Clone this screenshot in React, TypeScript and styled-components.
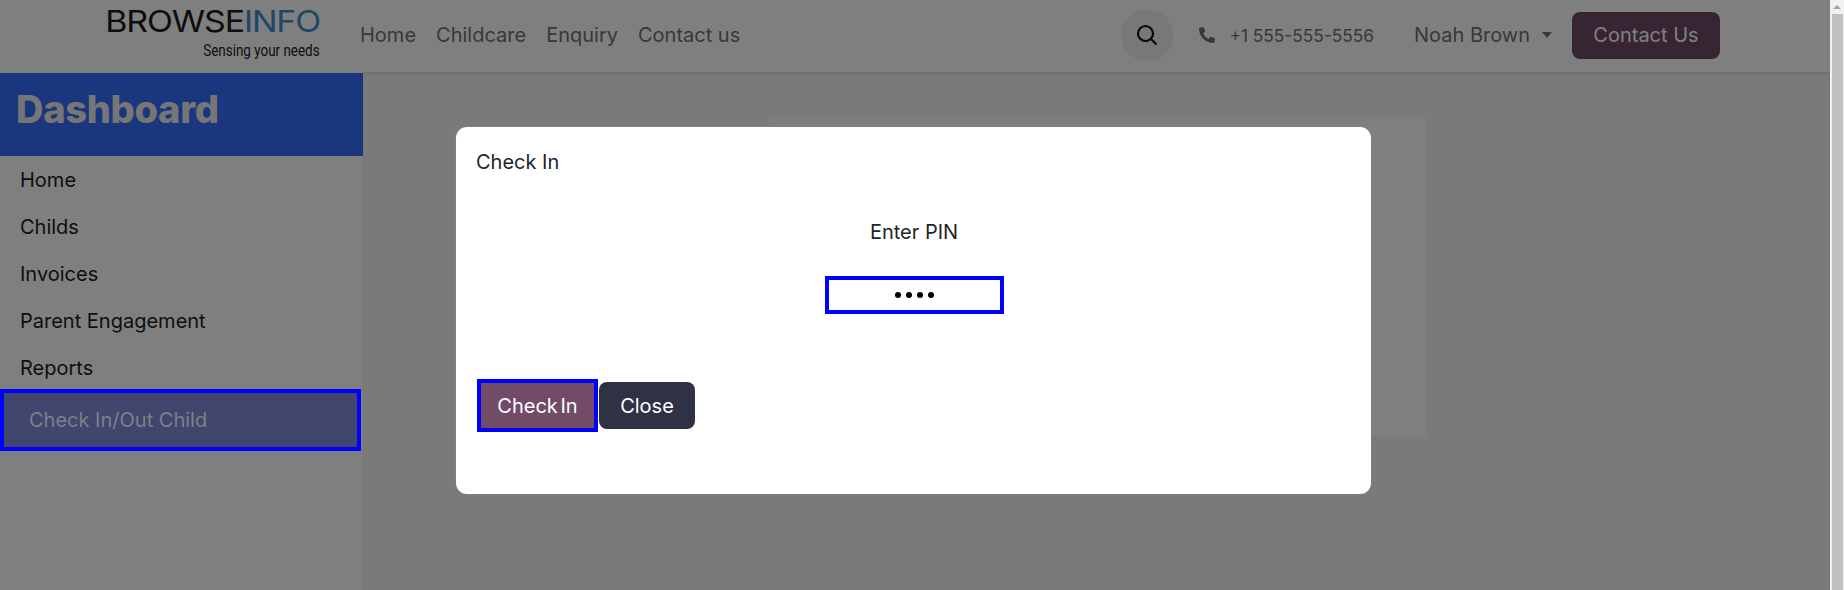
import React from 'react';
import styled, { createGlobalStyle } from 'styled-components';
import { FaPhoneAlt } from 'react-icons/fa';

const GlobalStyle = createGlobalStyle`
  html, body {
    margin: 0;
    padding: 0;
    height: 100%;
    overflow: hidden;
    background: #fff;
  }
  * {
    box-sizing: border-box;
    font-family: 'Inter', 'Liberation Sans', sans-serif;
  }
`;

const Root = styled.div`
  display: flex;
  width: 1844px;
  height: 590px;
`;

const Page = styled.div`
  position: relative;
  flex: 1;
  display: flex;
  flex-direction: column;
  background: #f4f4f4;
  overflow: hidden;
`;

const Header = styled.header`
  display: flex;
  align-items: center;
  height: 72px;
  flex-shrink: 0;
  padding: 0 0 2px 106px;
  background: #fff;
  box-shadow: 0 1px 3px rgba(0, 0, 0, 0.12);
`;

const Logo = styled.div`
  display: flex;
  flex-direction: column;
  align-items: flex-end;
  width: 214px;
  margin-right: 40px;
  color: #1a1a1a;
`;

const LogoWord = styled.div`
  font-size: 30px;
  line-height: 28px;
  font-weight: 400;
  letter-spacing: -1px;
  white-space: nowrap;
  transform: scaleX(1.13);
  transform-origin: right center;

  span {
    color: #3b8fd0;
  }
`;

const LogoTag = styled.div`
  font-family: 'Roboto', sans-serif;
  font-size: 16px;
  line-height: 18px;
  margin-top: 7px;
  margin-bottom: 3px;
  white-space: nowrap;
  transform: scaleX(0.84);
  transform-origin: right center;
`;

const Nav = styled.nav`
  display: flex;
  gap: 20px;
`;

const NavLink = styled.a`
  font-size: 20px;
  color: #75706f;
`;

const HeaderRight = styled.div`
  display: flex;
  align-items: center;
  margin-left: auto;
  padding-right: 110px;
`;

const SearchButton = styled.div`
  display: flex;
  align-items: center;
  justify-content: center;
  width: 52px;
  height: 52px;
  border-radius: 50%;
  background: #f0f0f0;
  color: #111;
`;

const Phone = styled.div`
  display: flex;
  align-items: center;
  gap: 14px;
  margin-left: 26px;
  font-size: 17.3px;
  color: #75706f;
`;

const UserMenu = styled.div`
  display: flex;
  align-items: center;
  gap: 12px;
  margin-left: 40px;
  font-size: 20px;
  color: #75706f;
`;

const Caret = styled.span`
  width: 0;
  height: 0;
  border-left: 5.5px solid transparent;
  border-right: 5.5px solid transparent;
  border-top: 6px solid #75706f;
`;

const ContactButton = styled.div`
  display: flex;
  align-items: center;
  justify-content: center;
  width: 148px;
  height: 47px;
  margin-left: 20px;
  border-radius: 8px;
  background: #714b67;
  color: #fff;
  font-size: 20px;
`;

const Body = styled.div`
  flex: 1;
  display: flex;
  min-height: 0;
`;

const Sidebar = styled.aside`
  width: 363px;
  background: #fff;
`;

const SidebarTitle = styled.div`
  display: flex;
  align-items: center;
  height: 83px;
  margin-top: 1px;
  padding: 0 16px 12px;
  background: #346cfe;
  color: #ececec;
  font-size: 38px;
  font-weight: 800;
  letter-spacing: -0.3px;
`;

const SideItem = styled.div`
  display: flex;
  align-items: center;
  height: 47px;
  padding: 1px 0 0 20px;
  font-size: 20px;
  color: #1c1c1c;
`;

// The focus ring is not dimmed in the reference, so this row sits over the backdrop
const ActiveItem = styled.div`
  position: relative;
  z-index: 20;
  display: flex;
  align-items: center;
  width: 361px;
  height: 62px;
  margin-top: -2px;
  padding-left: 25px;
  border: 4px solid #0000ff;
  background: #40466e;
  color: #7f7f86;
  font-size: 20px;
`;

const Content = styled.main`
  flex: 1;
  padding: 45px 0 0 406px;
`;

const Panel = styled.div`
  width: 657px;
  height: 320px;
  background: #fff;
`;

const Backdrop = styled.div`
  position: absolute;
  inset: 0;
  z-index: 10;
  background: rgba(0, 0, 0, 0.5);
`;

const Modal = styled.div`
  position: absolute;
  z-index: 30;
  left: 455px;
  top: 126px;
  width: 917px;
  height: 369px;
  display: flex;
  flex-direction: column;
  padding: 21px 19px 0 21px;
  border: 1px solid rgba(0, 0, 0, 0.5);
  border-radius: 12px;
  background: #fff;
  color: #212529;
`;

const ModalTitle = styled.div`
  font-size: 20px;
  line-height: 28px;
  margin-left: -1px;
`;

const PinBlock = styled.div`
  display: flex;
  flex-direction: column;
  align-items: center;
  margin-top: 42px;
`;

const PinLabel = styled.div`
  font-size: 20px;
  line-height: 28px;
  margin-right: 1px;
`;

const PinInput = styled.div`
  display: flex;
  align-items: center;
  justify-content: center;
  gap: 5px;
  width: 179px;
  height: 38px;
  margin-top: 30px;
  border: 4px solid #0000ff;
`;

const PinDot = styled.span`
  width: 6px;
  height: 6px;
  border-radius: 50%;
  background: #000;
`;

const ModalActions = styled.div`
  display: flex;
  align-items: center;
  gap: 1px;
  margin-top: 65px;
`;

const CheckInButton = styled.div`
  display: flex;
  align-items: center;
  justify-content: center;
  width: 121px;
  height: 53px;
  border: 4px solid #0000ff;
  background: #714b67;
  color: #fff;
  font-size: 20px;
  word-spacing: -3px;
`;

const CloseButton = styled.div`
  display: flex;
  align-items: center;
  justify-content: center;
  width: 96px;
  height: 47px;
  border-radius: 8px;
  background: #2f3245;
  color: #fff;
  font-size: 20px;
`;

const Scrollbar = styled.div`
  display: flex;
  flex-direction: column;
  align-items: center;
  width: 14px;
  flex-shrink: 0;
  background: #f1f1f1;
`;

const ScrollArrow = styled.div`
  width: 0;
  height: 0;
  margin: 5px 0 5px;
  border-left: 4px solid transparent;
  border-right: 4px solid transparent;
  border-bottom: 4px solid #a3a3a3;
`;

const ScrollThumb = styled.div`
  flex: 1;
  width: 11px;
  margin-left: 1px;
  background: #c1c1c1;
`;

const sideLinks = ['Home', 'Childs', 'Invoices', 'Parent Engagement', 'Reports'];
const navLinks = ['Home', 'Childcare', 'Enquiry', 'Contact us'];

const SearchIcon = () => (
  <svg width="22" height="22" viewBox="0 0 22 22" fill="none" stroke="currentColor" strokeWidth="2.2">
    <circle cx="9.5" cy="9.5" r="7.5" />
    <path d="M15 15 L20.5 20.5" />
  </svg>
);

const App = () => {
  return (
    <Root>
      <GlobalStyle />
      <Page>
        <Header>
          <Logo>
            <LogoWord>BROWSE<span>INFO</span></LogoWord>
            <LogoTag>Sensing your needs</LogoTag>
          </Logo>
          <Nav>
            {navLinks.map((l) => <NavLink key={l}>{l}</NavLink>)}
          </Nav>
          <HeaderRight>
            <SearchButton><SearchIcon /></SearchButton>
            <Phone><FaPhoneAlt size={16} />+1 555-555-5556</Phone>
            <UserMenu>Noah Brown <Caret /></UserMenu>
            <ContactButton>Contact Us</ContactButton>
          </HeaderRight>
        </Header>
        <Body>
          <Sidebar>
            <SidebarTitle>Dashboard</SidebarTitle>
            {sideLinks.map((l) => <SideItem key={l}>{l}</SideItem>)}
            <ActiveItem>Check In/Out Child</ActiveItem>
          </Sidebar>
          <Content>
            <Panel />
          </Content>
        </Body>
        <Backdrop />
        <Modal>
          <ModalTitle>Check In</ModalTitle>
          <PinBlock>
            <PinLabel>Enter PIN</PinLabel>
            <PinInput>
              <PinDot /><PinDot /><PinDot /><PinDot />
            </PinInput>
          </PinBlock>
          <ModalActions>
            <CheckInButton>Check In</CheckInButton>
            <CloseButton>Close</CloseButton>
          </ModalActions>
        </Modal>
      </Page>
      <Scrollbar>
        <ScrollArrow />
        <ScrollThumb />
      </Scrollbar>
    </Root>
  );
};

export default App;
